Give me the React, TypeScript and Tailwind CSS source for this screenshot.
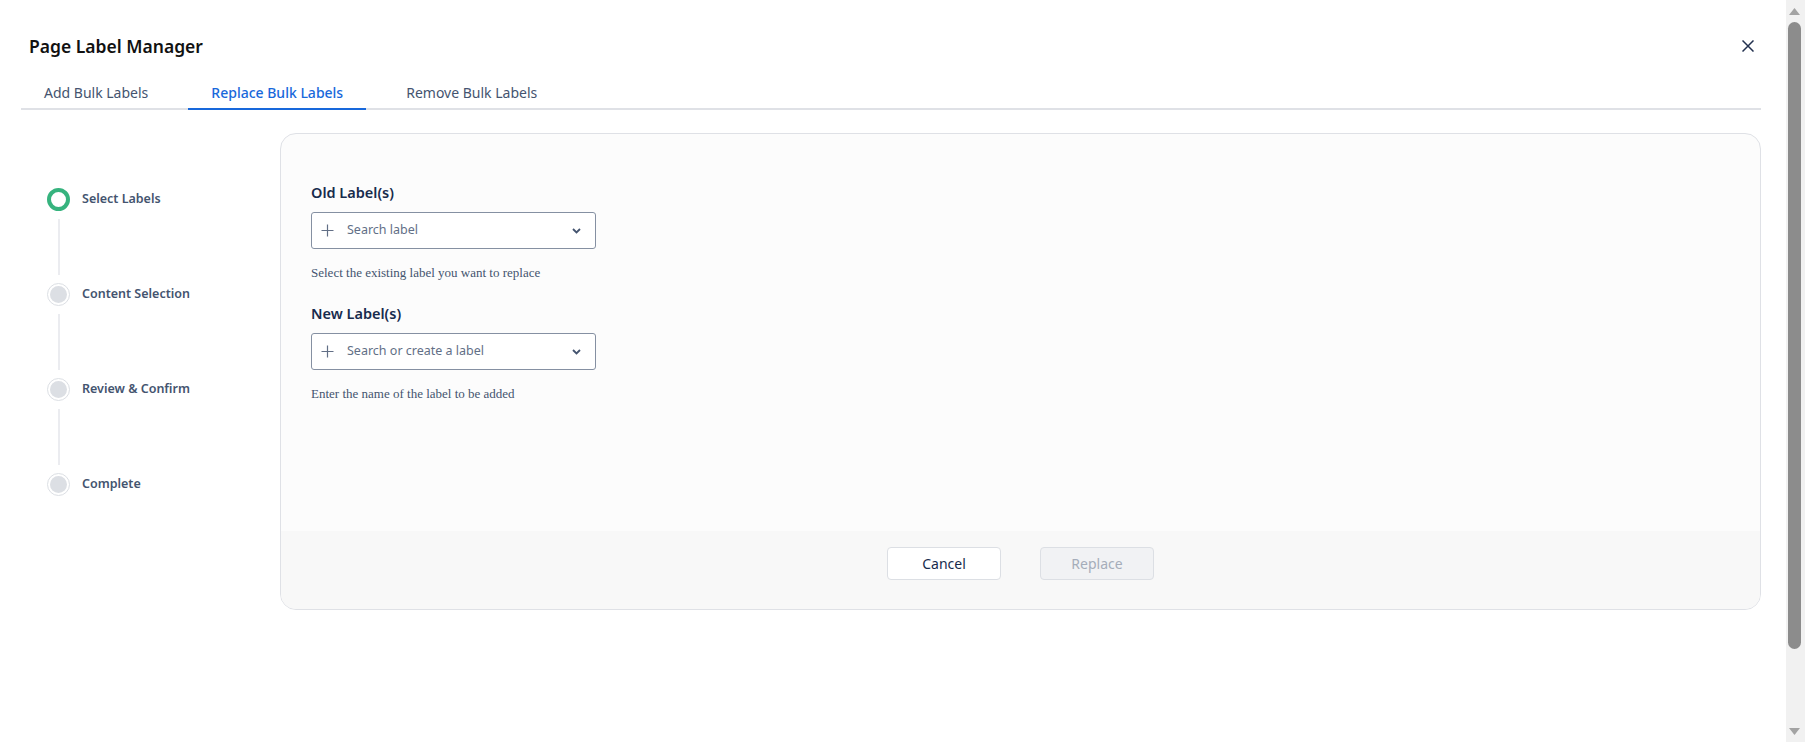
import React, { useState } from "react";

const font = { fontFamily: '"Noto Sans", "Open Sans", sans-serif' };
const serif = { fontFamily: '"Liberation Serif", serif' };

const tabs = ["Add Bulk Labels", "Replace Bulk Labels", "Remove Bulk Labels"];
const steps = ["Select Labels", "Content Selection", "Review & Confirm", "Complete"];

//Plus icon in the select field
const PlusIcon = () => (
  <svg width="13" height="13" viewBox="0 0 13 13" className="shrink-0">
    <path d="M6.5 0.5V12.5M0.5 6.5H12.5" stroke="#626f86" strokeWidth="1.2" fill="none" />
  </svg>
);

const Chevron = () => (
  <svg width="9" height="6" viewBox="0 0 9 6" className="shrink-0">
    <path d="M1 1L4.5 4.5L8 1" stroke="#44546f" strokeWidth="1.8" fill="none" />
  </svg>
);

const LabelSelect = ({ placeholder }: { placeholder: string }) => (
  <div className="flex items-center w-[285px] h-[37px] bg-white border border-[#8590a2] rounded-[3px] pl-[9px] pr-[14px]">
    <PlusIcon />
    <span className="ml-[13px] flex-1 text-[12.5px] text-[#626f86]">{placeholder}</span>
    <Chevron />
  </div>
);

const StepCircle = ({ active }: { active: boolean }) =>
  active ? (
    <div className="w-[23px] h-[23px] rounded-full border-[4px] border-[#36b37e] bg-white" />
  ) : (
    <div className="w-[23px] h-[23px] rounded-full border border-[#dcdfe4] bg-white flex items-center justify-center">
      <div className="w-[17px] h-[17px] rounded-full bg-[#dcdfe4]" />
    </div>
  );

//Fake window scrollbar
const ScrollBar = () => (
  <div className="w-[19px] shrink-0 bg-[#f1f1f1] flex flex-col items-start">
    <div className="h-[22px] w-full flex items-center pl-[2px]">
      <svg width="13" height="9" viewBox="0 0 13 9">
        <path d="M6.5 1L12 8H1Z" fill="#a3a3a3" />
      </svg>
    </div>
    <div className="ml-[2px] w-[13px] h-[627px] rounded-full bg-[#8c8c8c]" />
    <div className="flex-1" />
    <div className="h-[22px] w-full flex items-center pl-[2px]">
      <svg width="13" height="9" viewBox="0 0 13 9">
        <path d="M1 1H12L6.5 8Z" fill="#a3a3a3" />
      </svg>
    </div>
  </div>
);

const App = () => {
  const [tab, setTab] = useState(1);

  return (
    <div className="h-screen flex bg-white text-[#172b4d] overflow-hidden" style={font}>
      <div className="flex-1 min-w-0">
        {/* header */}
        <div className="flex items-center justify-between h-[28px] mt-[32px] pl-[29px] pr-[28px]">
          <h1 className="text-[17.5px] font-semibold text-[#111] leading-[28px]">Page Label Manager</h1>
          <button className="w-[20px] h-[20px] flex items-center justify-center">
            <svg width="12" height="12" viewBox="0 0 12 12">
              <path d="M0.5 0.5L11.5 11.5M11.5 0.5L0.5 11.5" stroke="#22314f" strokeWidth="1.5" fill="none" />
            </svg>
          </button>
        </div>

        {/* tabs */}
        <div className="flex gap-[17px] ml-[21px] mr-[25px] mt-[17px] border-b-2 border-[#dfe1e6]">
          {tabs.map((t, i) => (
            <button
              key={t}
              onClick={() => setTab(i)}
              className={`px-[23px] h-[33px] -mb-[2px] pt-[1px] text-[14px] leading-[20px] border-b-2 ${
                tab === i
                  ? "border-[#1868db] text-[#1868db] font-medium"
                  : "border-transparent text-[#44546f]"
              }`}
            >
              {t}
            </button>
          ))}
        </div>

        <div className="flex mt-[23px] mr-[25px]">
          {/* stepper */}
          <div className="w-[280px] shrink-0 pl-[47px] pt-[55px]">
            {steps.map((s, i) => (
              <div key={s} className="flex">
                <div className="flex flex-col items-center w-[23px]">
                  <StepCircle active={i === 0} />
                  {i < steps.length - 1 && <div className="w-[2px] h-[56px] my-[8px] bg-[#ebecf0]" />}
                </div>
                <span className="ml-[12px] h-[23px] flex items-center text-[12.5px] font-semibold text-[#44546f]">
                  {s}
                </span>
              </div>
            ))}
          </div>

          {/* card */}
          <div className="flex-1 h-[477px] flex flex-col border border-[#dfe1e6] rounded-[16px] bg-[#fcfcfc] overflow-hidden">
            <div className="flex-1 pl-[30px] pt-[48px]">
              <p className="text-[14.5px] font-semibold leading-[20px] text-[#172b4d]">Old Label(s)</p>
              <div className="mt-[10px]">
                <LabelSelect placeholder="Search label" />
              </div>
              <p className="mt-[15px] text-[13px] leading-[18px] text-[#44546f]" style={serif}>
                Select the existing label you want to replace
              </p>
              <p className="mt-[21px] text-[14.5px] font-semibold leading-[20px] text-[#172b4d]">New Label(s)</p>
              <div className="mt-[10px]">
                <LabelSelect placeholder="Search or create a label" />
              </div>
              <p className="mt-[15px] text-[13px] leading-[18px] text-[#44546f]" style={serif}>
                Enter the name of the label to be added
              </p>
            </div>
            <div className="h-[78px] bg-[#f8f8f8] flex justify-center gap-[39px] pt-[16px]">
              <button className="w-[114px] h-[33px] bg-white border border-[#dcdfe4] rounded-[4px] text-[14px] text-[#172b4d]">
                Cancel
              </button>
              <button
                disabled
                className="w-[114px] h-[33px] bg-[#f1f2f4] border border-[#dcdfe4] rounded-[4px] text-[14px] text-[#a5adba]"
              >
                Replace
              </button>
            </div>
          </div>
        </div>
      </div>
      <ScrollBar />
    </div>
  );
};

export default App;
